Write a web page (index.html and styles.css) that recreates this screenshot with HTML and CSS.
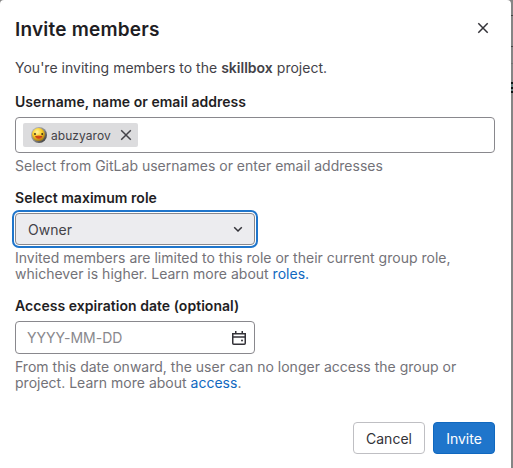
FILE: index.html
```html
<!DOCTYPE html>
<html lang="en">
<head>
<meta charset="utf-8">
<title>Invite members</title>
<link rel="stylesheet" href="styles.css">
</head>
<body>
<div class="page">
<div class="backdrop"><i class="rule r1"></i><i class="rule r2"></i><i class="rule r3"></i><i class="menu"></i></div>
<main class="modal">
  <header class="head">
    <h1>Invite members</h1>
    <svg class="close" width="16" height="16" viewBox="0 0 16 16"><path d="M3.3 3.3 12.7 12.7M12.7 3.3 3.3 12.7"/></svg>
  </header>
  <p class="intro">You're inviting members to the <strong>skillbox</strong> project.</p>
  <section class="group users">
    <h2>Username, name or email address</h2>
    <div class="field tokens">
      <span class="token">
        <svg class="avatar" width="16" height="16" viewBox="0 0 16 16">
          <defs><radialGradient id="face" cx=".4" cy=".3" r=".7"><stop offset="0" stop-color="#fff6a0"/><stop offset=".5" stop-color="#fbd02a"/><stop offset="1" stop-color="#a87a14"/></radialGradient>
          <linearGradient id="rim" x1="0" y1="0" x2="1" y2="1"><stop offset="0" stop-color="#c2c3c8"/><stop offset=".5" stop-color="#8b8b8b"/><stop offset="1" stop-color="#292929"/></linearGradient></defs>
          <circle cx="8" cy="8" r="8" fill="url(#rim)"/><circle cx="7.5" cy="7.6" r="6.5" fill="url(#face)"/>
          <circle cx="4" cy="7" r=".9" fill="#332a16"/><circle cx="11.2" cy="7" r=".9" fill="#332a16"/>
          <path d="M4 9Q7.5 7.8 11.5 9 10.5 12 7.7 12 5 12 4 9Z"/><path d="M4.5 9.6Q7.5 10.8 11 9.6"/>
        </svg>
        <span class="name">abuzyarov</span>
        <svg class="remove" width="16" height="16" viewBox="0 0 16 16"><path d="M3.2 3.2 12.8 12.8M12.8 3.2 3.2 12.8"/></svg>
      </span>
    </div>
    <p class="hint">Select from GitLab usernames or enter email addresses</p>
  </section>
  <section class="group role">
    <h2>Select maximum role</h2>
    <div class="field select"><span>Owner</span><svg width="16" height="16" viewBox="0 0 16 16"><path d="m4.2 6.2 3.8 3.8 3.8-3.8"/></svg></div>
    <p class="hint">Invited members are limited to this role or their current group role,<br>whichever is higher. Learn more about <a>roles.</a></p>
  </section>
  <section class="group expiry">
    <h2>Access expiration date (optional)</h2>
    <div class="field date"><span>YYYY-MM-DD</span><svg width="16" height="16" viewBox="0 0 16 16"><path d="M1.75 3.75h12.5v9.5a1 1 0 0 1-1 1H2.75a1 1 0 0 1-1-1ZM2 7h12M4.75 1v3M11.25 1v3"/><circle cx="11" cy="10.5" r="1"/></svg></div>
    <p class="hint">From this date onward, the user can no longer access the group or<br>project. Learn more about <a>access</a>.</p>
  </section>
  <footer class="actions"><button class="cancel">Cancel</button><button class="invite">Invite</button></footer>
</main>
</div>
</body>
</html>
```

FILE: styles.css
```css
* { box-sizing: border-box; }
body { margin: 0; font-family: Inter, "Liberation Sans", sans-serif; font-size: 14px; line-height: 16px; letter-spacing: .01px; color: #434248; }
.page { position: relative; width: 513px; height: 468px; overflow: hidden; background: #858585; }
.backdrop { position: absolute; inset: 0; }
.rule { position: absolute; right: 0; width: 3px; height: 1px; background: #444; }
.r1 { top: 15px; }
.r2 { top: 46px; }
.r3 { top: 63px; background: #737373; }
.menu { position: absolute; right: 0; top: 82px; width: 3px; height: 11px; background: repeating-linear-gradient(#101515 0 2px, #638080 2px 4.5px); }
.modal { position: relative; width: 511px; height: 468px; padding: 16px 16px 0 15px; background: #fff; border-radius: 4px 4px 0 0; white-space: nowrap; }
h1, h2, p { margin: 0; }
.head { display: flex; justify-content: space-between; height: 26px; }
h1 { font-size: 19px; line-height: 27px; letter-spacing: .2px; font-weight: 600; color: #1f1e24; }
.close { margin: 4px 4px 0 0; }
svg path { fill: none; stroke: #333238; stroke-width: 1.5; }
.avatar path:first-of-type { fill: #e0541b; stroke: none; }
.avatar path:last-of-type { stroke: #a92d12; stroke-width: .7; }
.intro { margin-top: 18px; letter-spacing: .015px; }
strong { font-weight: 600; }
h2 { font-size: 14px; line-height: 16px; letter-spacing: .035px; font-weight: 600; color: #1f1e24; }
.group { margin-top: 18px; }
.role, .expiry { margin-top: 16px; }
.field { display: flex; align-items: center; border: 1px solid #89888d; border-radius: 4px; }
.tokens { height: 36px; margin-top: 7px; padding-left: 7px; }
.token { display: flex; align-items: center; width: 115px; height: 24px; padding-left: 8px; background: #dcdcde; border-radius: 2px; font-size: 12px; }
.name { width: 60px; margin-left: 4px; padding-top: 1px; letter-spacing: .05px; }
.remove { margin-left: 7px; }
.remove path { stroke: #434248; }
.hint { color: #737278; margin-top: 5px; }
.select, .date { width: 240px; justify-content: space-between; padding: 0 8px 0 12px; }
.select { height: 32px; margin-top: 7px; background: #ececef; box-shadow: 0 0 0 1px #fff, 0 0 0 3px #1f75cb; }
.select span { padding-top: 1px; }
.date { height: 33px; margin-top: 7px; padding: 0 7px 0 11px; color: #89888d; }
.date circle { fill: #333238; }
a { color: #1068bf; }
.actions { display: flex; justify-content: flex-end; gap: 8px; margin-top: 31px; }
button { height: 32px; padding: 2px 0 0; border-radius: 4px; font: 14px/16px Inter, "Liberation Sans", sans-serif; }
.cancel { width: 72px; color: #333238; background: #fff; border: 1px solid #bfbfc3; }
.invite { width: 62px; color: #fff; background: #1f75cb; border: 1px solid #1068bf; }
```
